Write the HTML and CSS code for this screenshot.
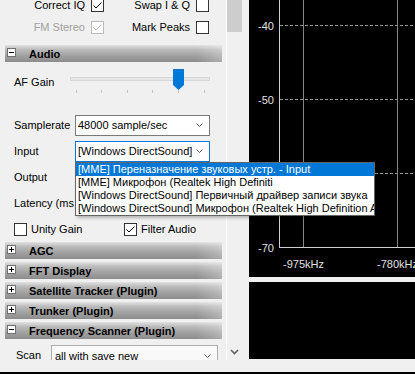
FILE: index.html
```html
<!DOCTYPE html>
<html>
<head>
<meta charset="utf-8">
<link rel="stylesheet" href="styles.css">
</head>
<body>
<div class="app">
  <div class="left">
    <div class="viewport">
      <div class="content">
        <div class="opt-row r1">
          <div class="opt g1"><span class="opt-label">Correct IQ</span><span class="cb"><svg width="11" height="11"><polyline points="1.5,5.5 4,8 9.5,2.5" fill="none" stroke="#000" stroke-width="1"/></svg></span></div>
          <div class="opt g2"><span class="opt-label">Swap I &amp; Q</span><span class="cb"></span></div>
        </div>
        <div class="opt-row r2">
          <div class="opt g1"><span class="opt-label disabled">FM Stereo</span><span class="cb cb-disabled"><svg width="11" height="11"><polyline points="1.5,5.5 4,8 9.5,2.5" fill="none" stroke="#bcbcbc" stroke-width="1"/></svg></span></div>
          <div class="opt g2"><span class="opt-label">Mark Peaks</span><span class="cb"></span></div>
        </div>

        <div class="hdr hdr-first"><svg class="hicon" width="9" height="9"><rect x="0.5" y="0.5" width="8" height="8" fill="#fff" stroke="#707070"/><line x1="2" y1="4.5" x2="7" y2="4.5" stroke="#000"/></svg><span>Audio</span></div>
        <div class="audio-body">
          <div class="af-row">
            <span class="af-label">AF Gain</span>
            <svg class="slider" width="140" height="26" viewBox="0 0 140 26">
              <rect x="0.5" y="9.5" width="139" height="3" fill="#e7e7e7" stroke="#d6d6d6"/>
              <g stroke="#c4c4c4">
                <line x1="6.5" y1="22" x2="6.5" y2="25"/>
                <line x1="31.5" y1="22" x2="31.5" y2="25"/>
                <line x1="57.5" y1="22" x2="57.5" y2="25"/>
                <line x1="82.5" y1="22" x2="82.5" y2="25"/>
                <line x1="108.5" y1="22" x2="108.5" y2="25"/>
                <line x1="134.5" y1="22" x2="134.5" y2="25"/>
              </g>
              <polygon points="103,1 114,1 114,17 108.5,22 103,17" fill="#0078d7"/>
            </svg>
          </div>
          <div class="field-row">
            <span class="field-label">Samplerate</span>
            <div class="combo"><span>48000 sample/sec</span><svg class="chev" width="7" height="4"><polyline points="0.5,0.5 3.5,3.5 6.5,0.5" fill="none" stroke="#555"/></svg></div>
          </div>
          <div class="field-row">
            <span class="field-label">Input</span>
            <div class="combo combo-focus"><span>[Windows DirectSound]</span><svg class="chev" width="7" height="4"><polyline points="0.5,0.5 3.5,3.5 6.5,0.5" fill="none" stroke="#555"/></svg>
              <div class="droplist">
                <div class="item sel">[MME] Переназначение звуковых устр. - Input</div>
                <div class="item">[MME] Микрофон (Realtek High Definiti</div>
                <div class="item">[Windows DirectSound] Первичный драйвер записи звука</div>
                <div class="item">[Windows DirectSound] Микрофон (Realtek High Definition Au</div>
              </div>
            </div>
          </div>
          <div class="field-row">
            <span class="field-label">Output</span>
            <div class="combo"><span></span></div>
          </div>
          <div class="field-row">
            <span class="field-label latency">Latency (ms</span>
            <div class="combo"><span></span></div>
          </div>
          <div class="chk-row">
            <div class="chk g3"><span class="cb"></span><span>Unity Gain</span></div>
            <div class="chk"><span class="cb"><svg width="11" height="11"><polyline points="1.5,5.5 4,8 9.5,2.5" fill="none" stroke="#000" stroke-width="1"/></svg></span><span>Filter Audio</span></div>
          </div>
        </div>

        <div class="hdr"><svg class="hicon" width="9" height="9"><rect x="0.5" y="0.5" width="8" height="8" fill="#fff" stroke="#707070"/><line x1="2" y1="4.5" x2="7" y2="4.5" stroke="#000"/><line x1="4.5" y1="2" x2="4.5" y2="7" stroke="#000"/></svg><span>AGC</span></div>
        <div class="hdr"><svg class="hicon" width="9" height="9"><rect x="0.5" y="0.5" width="8" height="8" fill="#fff" stroke="#707070"/><line x1="2" y1="4.5" x2="7" y2="4.5" stroke="#000"/><line x1="4.5" y1="2" x2="4.5" y2="7" stroke="#000"/></svg><span>FFT Display</span></div>
        <div class="hdr"><svg class="hicon" width="9" height="9"><rect x="0.5" y="0.5" width="8" height="8" fill="#fff" stroke="#707070"/><line x1="2" y1="4.5" x2="7" y2="4.5" stroke="#000"/><line x1="4.5" y1="2" x2="4.5" y2="7" stroke="#000"/></svg><span>Satellite Tracker (Plugin)</span></div>
        <div class="hdr"><svg class="hicon" width="9" height="9"><rect x="0.5" y="0.5" width="8" height="8" fill="#fff" stroke="#707070"/><line x1="2" y1="4.5" x2="7" y2="4.5" stroke="#000"/><line x1="4.5" y1="2" x2="4.5" y2="7" stroke="#000"/></svg><span>Trunker (Plugin)</span></div>
        <div class="hdr"><svg class="hicon" width="9" height="9"><rect x="0.5" y="0.5" width="8" height="8" fill="#fff" stroke="#707070"/><line x1="2" y1="4.5" x2="7" y2="4.5" stroke="#000"/></svg><span>Frequency Scanner (Plugin)</span></div>
        <div class="scan-body">
          <span class="scan-label">Scan</span>
          <div class="combo scan-combo"><span>all with save new</span><svg class="chev" width="7" height="4"><polyline points="0.5,0.5 3.5,3.5 6.5,0.5" fill="none" stroke="#555"/></svg></div>
        </div>
      </div>
    </div>
    <div class="vscroll">
      <div class="thumb"></div>
      <div class="track"></div>
      <div class="down-btn"><svg width="9" height="6"><polyline points="1,1 4.5,4.5 8,1" fill="none" stroke="#606060" stroke-width="1.6"/></svg></div>
    </div>
  </div>

  <div class="right">
    <div class="spectrum">
      <svg width="166" height="277" viewBox="0 0 166 277">
        <g stroke="#9a9a9a" stroke-dasharray="3 2">
          <line x1="31" y1="25.5" x2="166" y2="25.5"/>
          <line x1="31" y1="99.5" x2="166" y2="99.5"/>
          <line x1="31" y1="173.5" x2="166" y2="173.5"/>
        </g>
        <line x1="54.5" y1="0" x2="54.5" y2="247" stroke="#858585"/>
        <line x1="148.5" y1="0" x2="148.5" y2="247" stroke="#858585"/>
        <line x1="30.5" y1="0" x2="30.5" y2="248" stroke="#cfcfcf"/>
        <line x1="30" y1="247.5" x2="166" y2="247.5" stroke="#cfcfcf"/>
        <g fill="#e2e2e2" font-family="Liberation Sans, Arial, sans-serif" font-size="11" text-anchor="end">
          <text x="25" y="30">-40</text>
          <text x="25" y="104">-50</text>
          <text x="25" y="252">-70</text>
        </g>
        <g fill="#e2e2e2" font-family="Liberation Sans, Arial, sans-serif" font-size="11" text-anchor="middle">
          <text x="54.5" y="268">-975kHz</text>
          <text x="148.5" y="268">-780kHz</text>
        </g>
      </svg>
    </div>
    <div class="waterfall"></div>
  </div>

  <div class="status"></div>
  <div class="bottom-line"></div>
</div>
</body>
</html>
```

FILE: styles.css
```css
* { box-sizing: border-box; }
html, body { margin: 0; padding: 0; }
body {
  width: 415px;
  height: 374px;
  overflow: hidden;
  background: #f0f0f0;
  font-family: "Liberation Sans", Arial, sans-serif;
  font-size: 11px;
  color: #000;
}
.app {
  display: grid;
  grid-template-columns: 249px 166px;
  grid-template-rows: 360px 12px 2px;
  width: 415px;
  height: 374px;
}
.left { display: flex; background: #f0f0f0; }
.viewport { width: 226px; height: 360px; }
.content { margin-top: -5px; }

.opt-row { display: flex; align-items: center; }
.r1 { height: 21px; }
.r2 { height: 22px; }
.opt { display: flex; align-items: center; gap: 6px; }
.opt-label { text-align: right; white-space: nowrap; line-height: 13px; }
.g1 .opt-label { width: 85px; }
.g2 .opt-label { width: 86px; }
.disabled { color: #a0a0a0; }

.cb {
  width: 13px; height: 13px;
  border: 1px solid #333;
  background: #fff;
  display: inline-flex;
  flex: none;
}
.cb-disabled { border-color: #bcbcbc; }

.hdr {
  margin-left: 5px;
  width: 217px;
  height: 17px;
  margin-top: 3px;
  display: flex;
  align-items: center;
  padding-left: 2px;
  font-weight: bold;
  font-size: 11px;
  background:
    linear-gradient(to right, rgba(255,255,255,0) 88%, rgba(255,255,255,0.28)),
    linear-gradient(to bottom, #e2e2e2 0%, #bdbdbd 25%, #a2a2a2 60%, #8c8c8c 100%);
}
.hdr-first { margin-top: 7px; }
.hicon { flex: none; margin-right: 13px; margin-top: -2px; }

.audio-body { display: flex; flex-direction: column; }
.af-row { height: 50px; display: flex; padding-left: 14px; }
.af-label { width: 56px; padding-top: 14px; line-height: 13px; }
.slider { margin-top: 6px; display: block; }

.field-row { height: 26px; display: flex; align-items: center; padding-left: 14px; }
.field-label { width: 61px; white-space: nowrap; flex: none; }
.latency { overflow: hidden; }
.combo {
  position: relative;
  width: 135px;
  height: 21px;
  flex: none;
  border: 1px solid #7a7a7a;
  background: #fff;
  display: flex;
  align-items: center;
  padding-left: 2px;
  white-space: nowrap;
}
.combo-focus { border-color: #0078d7; }
.chev { margin-left: auto; margin-right: 6px; flex: none; }

.droplist {
  position: absolute;
  top: 20px;
  left: -1px;
  width: 300px;
  border: 1px solid #646464;
  background: #fff;
  z-index: 10;
  box-shadow: 2px 2px 3px rgba(0,0,0,0.25);
}
.item { height: 13px; line-height: 13px; padding-left: 2px; white-space: nowrap; overflow: hidden; }
.item.sel { background: #0078d7; color: #fff; }

.chk-row { height: 23px; padding-top: 3px; display: flex; align-items: center; padding-left: 14px; }
.chk { display: flex; align-items: center; gap: 4px; white-space: nowrap; }
.g3 { width: 110px; }

.scan-body {
  height: 21px;
  overflow: hidden;
  display: flex;
  align-items: flex-start;
  padding-top: 6px;
  padding-left: 16px;
}
.scan-label { width: 35px; line-height: 21px; }
.scan-combo { width: 167px; background: #f9f9f9; border-color: #adadad; padding-left: 3px; }

.vscroll {
  width: 17px;
  height: 360px;
  border-left: 1px solid #fff;
  display: flex;
  flex-direction: column;
  background: #f0f0f0;
}
.thumb { width: 15px; height: 32px; background: #cdcdcd; }
.track { flex: 1; }
.down-btn { height: 17px; display: flex; align-items: center; justify-content: center; padding-right: 1px; }

.right { display: flex; flex-direction: column; gap: 5px; background: #f0f0f0; }
.spectrum { height: 277px; background: #000; }
.spectrum svg { display: block; }
.waterfall { height: 77px; background: #000; }

.status { grid-column: 1 / -1; background: #f0f0f0; }
.bottom-line { grid-column: 1 / -1; background: #000; }
```
